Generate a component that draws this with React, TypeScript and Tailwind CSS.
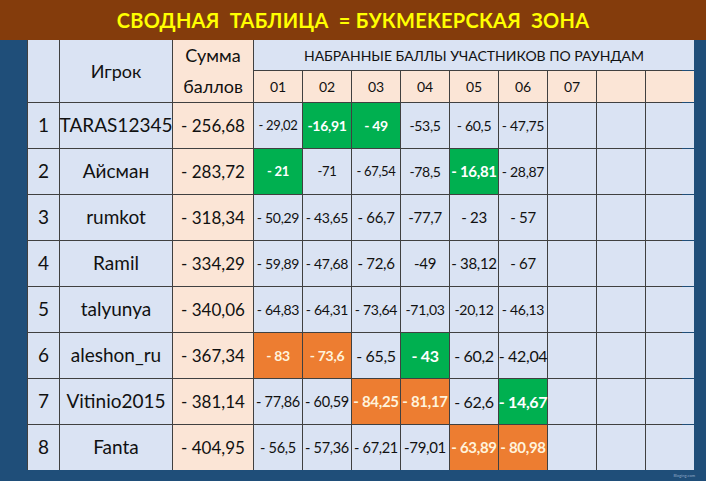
import React from 'react'

type Cell = { v: string; tone?: 'g' | 'o'; size?: string }

const rows: { n: number; name: string; sum: string; size: string; cells: Cell[] }[] = [
  { n: 1, name: 'TARAS12345', sum: '- 256,68', size: 'text-[13px]', cells: [
    { v: '- 29,02' }, { v: '-16,91', tone: 'g', size: 'text-[14px]' }, { v: '- 49', tone: 'g', size: 'text-[14px]' }, { v: '-53,5', size: 'text-[14px]' }, { v: '- 60,5', size: 'text-[14px]' }, { v: '- 47,75', size: 'text-[14px]' } ] },
  { n: 2, name: 'Айсман', sum: '- 283,72', size: 'text-[13px]', cells: [
    { v: '- 21', tone: 'g' }, { v: '-71' }, { v: '- 67,54' }, { v: '-78,5', size: 'text-[14px]' }, { v: '- 16,81', tone: 'g', size: 'text-[15px]' }, { v: '- 28,87', size: 'text-[14px]' } ] },
  { n: 3, name: 'rumkot', sum: '- 318,34', size: 'text-[14px]', cells: [
    { v: '- 50,29' }, { v: '- 43,65' }, { v: '- 66,7', size: 'text-[15px]' }, { v: '-77,7', size: 'text-[15px]' }, { v: '- 23', size: 'text-[15px]' }, { v: '- 57', size: 'text-[15px]' } ] },
  { n: 4, name: 'Ramil', sum: '- 334,29', size: 'text-[14px]', cells: [
    { v: '- 59,89' }, { v: '- 47,68' }, { v: '- 72,6', size: 'text-[15px]' }, { v: '-49', size: 'text-[15px]' }, { v: '- 38,12', size: 'text-[15px]' }, { v: '- 67', size: 'text-[15px]' } ] },
  { n: 5, name: 'talyunya', sum: '- 340,06', size: 'text-[14px]', cells: [
    { v: '- 64,83' }, { v: '- 64,31' }, { v: '- 73,64' }, { v: '-71,03' }, { v: '-20,12' }, { v: '- 46,13' } ] },
  { n: 6, name: 'aleshon_ru', sum: '- 367,34', size: 'text-[16px]', cells: [
    { v: '- 83', tone: 'o', size: 'text-[14px]' }, { v: '- 73,6', tone: 'o', size: 'text-[14px]' }, { v: '- 65,5' }, { v: '- 43', tone: 'g' }, { v: '- 60,2' }, { v: '- 42,04' } ] },
  { n: 7, name: 'Vitinio2015', sum: '- 381,14', size: 'text-[14.5px]', cells: [
    { v: '- 77,86' }, { v: '- 60,59' }, { v: '- 84,25', tone: 'o', size: 'text-[15px]' }, { v: '- 81,17', tone: 'o', size: 'text-[15px]' }, { v: '- 62,6', size: 'text-[16px]' }, { v: '- 14,67', tone: 'g', size: 'text-[16px]' } ] },
  { n: 8, name: 'Fanta', sum: '- 404,95', size: 'text-[14.5px]', cells: [
    { v: '- 56,5' }, { v: '- 57,36' }, { v: '- 67,21' }, { v: '-79,01', size: 'text-[15px]' }, { v: '- 63,89', tone: 'o', size: 'text-[15px]' }, { v: '- 80,98', tone: 'o', size: 'text-[15px]' } ] },
]

const rounds = ['01', '02', '03', '04', '05', '06', '07', '', '']

export default function App() {
  return (
    <div className="w-[706px] h-[481px] bg-[#1f4e79] flex flex-col overflow-hidden" style={{ fontFamily: 'Lato, "Open Sans", sans-serif' }}>
      <div className="h-[40px] bg-[#843c0c] flex items-center justify-center">
        <h1 className="text-[#ffff00] font-bold text-[20px] whitespace-pre tracking-[0.25px]">
          СВОДНАЯ  ТАБЛИЦА  = БУКМЕКЕРСКАЯ  ЗОНА
        </h1>
      </div>

      <div className="ml-[27px] w-[655px] grid grid-cols-[31px_112px_80px_repeat(9,48px)] grid-rows-[30px_31px_repeat(8,45px)] gap-px bg-[#404040] pl-px text-[#111]">
        <div className="row-span-2 bg-[#dae3f3]" />
        <div className="row-span-2 bg-[#dae3f3] flex items-center justify-center text-[18px]">Игрок</div>
        <div className="row-span-2 bg-[#fbe5d6] flex flex-col items-center justify-center text-[18px] leading-[31px]">
          <span>Сумма</span>
          <span>баллов</span>
        </div>
        <div className="col-span-9 bg-[#dae3f3] flex items-center justify-center text-[14px]">
          НАБРАННЫЕ БАЛЛЫ УЧАСТНИКОВ ПО РАУНДАМ
        </div>
        {rounds.map((r, i) => (
          <div key={i} className="bg-[#fbe5d6] flex items-center justify-center text-[14px]">{r}</div>
        ))}

        {rows.map((row) => (
          <React.Fragment key={row.n}>
            <div className="bg-[#dae3f3] flex items-center justify-center text-[19px]">{row.n}</div>
            <div className="bg-[#dae3f3] flex items-center justify-center text-[19px] whitespace-nowrap">{row.name}</div>
            <div className="bg-[#fbe5d6] flex items-center justify-center text-[17px] whitespace-pre">{row.sum}</div>
            {Array.from({ length: 9 }).map((_, i) => {
              const c = row.cells[i]
              const bg = c?.tone === 'g' ? 'bg-[#00b050] text-white font-bold' : c?.tone === 'o' ? 'bg-[#ed7d31] text-[#fff3dc] font-bold' : 'bg-[#dae3f3]'
              return (
                <div key={i} className={`${bg} ${c?.size ?? row.size} flex items-center justify-center whitespace-pre tracking-[-0.3px]`}>
                  {c?.v ?? ''}
                </div>
              )
            })}
          </React.Fragment>
        ))}
      </div>

      <div className="flex justify-end pr-[11px] pt-[3px]">
        <span className="text-[4px] text-[#8fa8c6]">Bloging.com</span>
      </div>
    </div>
  )
}
